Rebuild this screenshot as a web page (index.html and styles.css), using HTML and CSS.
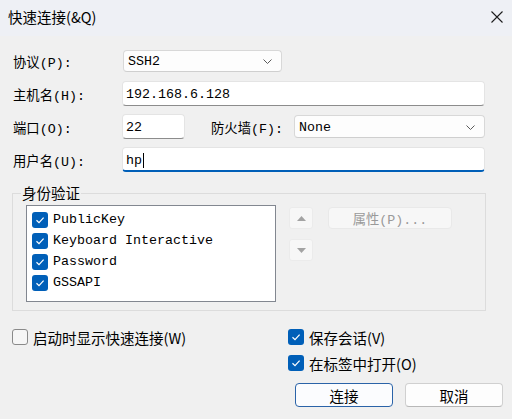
FILE: index.html
```html
<!DOCTYPE html>
<html lang="zh-CN">
<head>
<meta charset="utf-8">
<title>快速连接</title>
<link rel="stylesheet" href="styles.css">
</head>
<body>
<div class="titlebar">
  <span class="title">快速连接(&amp;Q)</span>
  <span class="close"><svg width="12" height="12" viewBox="0 0 12 12"><path d="M0.5 0.5 L11.5 11.5 M11.5 0.5 L0.5 11.5" stroke="#1c1c1c" stroke-width="1.1" fill="none"/></svg></span>
</div>
<div class="content">
  <div class="form">
    <div class="row">
      <span class="lbl">协议(P):</span>
      <div class="combo w-proto"><span>SSH2</span><svg class="chev" width="9" height="5" viewBox="0 0 9 5"><path d="M0.5 0.5 L4.5 4.5 L8.5 0.5" stroke="#5a5a5a" stroke-width="1" fill="none"/></svg></div>
    </div>
    <div class="row">
      <span class="lbl">主机名(H):</span>
      <div class="input w-full">192.168.6.128</div>
    </div>
    <div class="row">
      <span class="lbl">端口(O):</span>
      <div class="input w-port">22</div>
      <span class="lbl lbl-fw">防火墙(F):</span>
      <div class="combo w-fw"><span>None</span><svg class="chev" width="9" height="5" viewBox="0 0 9 5"><path d="M0.5 0.5 L4.5 4.5 L8.5 0.5" stroke="#5a5a5a" stroke-width="1" fill="none"/></svg></div>
    </div>
    <div class="row">
      <span class="lbl">用户名(U):</span>
      <div class="input focus w-full">hp<span class="caret"></span></div>
    </div>
  </div>

  <fieldset class="group">
    <legend class="legend">身份验证</legend>
    <div class="group-body">
      <div class="listbox">
        <div class="item"><span class="cb on"><svg width="16" height="16" viewBox="0 0 16 16"><path d="M4.5 8.2 L7 10.6 L11.6 5.6" stroke="#fff" stroke-width="1.2" fill="none"/></svg></span>PublicKey</div>
        <div class="item"><span class="cb on"><svg width="16" height="16" viewBox="0 0 16 16"><path d="M4.5 8.2 L7 10.6 L11.6 5.6" stroke="#fff" stroke-width="1.2" fill="none"/></svg></span>Keyboard Interactive</div>
        <div class="item"><span class="cb on"><svg width="16" height="16" viewBox="0 0 16 16"><path d="M4.5 8.2 L7 10.6 L11.6 5.6" stroke="#fff" stroke-width="1.2" fill="none"/></svg></span>Password</div>
        <div class="item"><span class="cb on"><svg width="16" height="16" viewBox="0 0 16 16"><path d="M4.5 8.2 L7 10.6 L11.6 5.6" stroke="#fff" stroke-width="1.2" fill="none"/></svg></span>GSSAPI</div>
      </div>
      <div class="arrows">
        <div class="arrow-btn"><svg width="9" height="5" viewBox="0 0 9 5"><path d="M0 5 L4.5 0 L9 5 Z" fill="#a3a3a3"/></svg></div>
        <div class="arrow-btn"><svg width="9" height="5" viewBox="0 0 9 5"><path d="M0 0 L9 0 L4.5 5 Z" fill="#a3a3a3"/></svg></div>
      </div>
      <div class="props">属性(P)...</div>
    </div>
  </fieldset>

  <div class="bottom">
    <div class="bottom-left">
      <div class="check-row"><span class="cb off"></span>启动时显示快速连接(W)</div>
    </div>
    <div class="bottom-right">
      <div class="check-row"><span class="cb on"><svg width="16" height="16" viewBox="0 0 16 16"><path d="M4.5 8.2 L7 10.6 L11.6 5.6" stroke="#fff" stroke-width="1.2" fill="none"/></svg></span>保存会话(V)</div>
      <div class="check-row"><span class="cb on"><svg width="16" height="16" viewBox="0 0 16 16"><path d="M4.5 8.2 L7 10.6 L11.6 5.6" stroke="#fff" stroke-width="1.2" fill="none"/></svg></span>在标签中打开(O)</div>
      <div class="buttons">
        <div class="btn btn-default">连接</div>
        <div class="btn">取消</div>
      </div>
    </div>
  </div>
</div>
</body>
</html>
```

FILE: styles.css
```css
* { box-sizing: border-box; }
html, body { margin: 0; padding: 0; }
body {
  width: 512px;
  height: 419px;
  overflow: hidden;
  background: #f0f0f0;
  color: #000;
  font-family: "Noto Sans CJK SC", "Noto Sans", sans-serif;
}
.titlebar {
  height: 36px;
  background: #eef0f5;
  display: flex;
  align-items: center;
  justify-content: space-between;
  padding: 0 9px 2px 8px;
}
.title { font-size: 14.5px; line-height: 1; }
.close { display: flex; width: 12px; height: 12px; }

.content { padding: 12px 9px 0 12px; }

.form { display: flex; flex-direction: column; gap: 8px; }
.row { display: flex; align-items: center; height: 25px; }
.lbl {
  width: 110px;
  padding-left: 1px;
  padding-top: 2px;
  font-family: "Liberation Mono", "Noto Sans CJK SC", monospace;
  font-size: 13.33px;
  white-space: nowrap;
}
.lbl-fw { width: 83px; margin-left: 26px; padding-left: 0; }

.combo {
  height: 22px;
  background: #fdfdfd;
  border: 1px solid #d8d8d8;
  border-bottom-color: #cfcfcf;
  border-radius: 4px;
  display: flex;
  align-items: center;
  justify-content: space-between;
  padding: 1px 9px 0 4px;
  font-family: "Liberation Mono", monospace;
  font-size: 13.33px;
}
.w-proto { width: 159px; margin-left: 1px; margin-top: 1px; }
.w-fw { width: 191px; height: 23px; }

.input {
  height: 25px;
  background: #fff;
  border: 1px solid #e4e4e4;
  border-bottom: 1px solid #8c8c8c;
  border-radius: 4px;
  display: flex;
  align-items: center;
  padding: 1px 3px 0;
  font-family: "Liberation Mono", monospace;
  font-size: 13.33px;
}
.input.focus { border-bottom: 2px solid #005fb8; padding-top: 2px; }
.w-full { width: 363px; }
.w-port { width: 63px; }
.caret { display: inline-block; width: 1px; height: 15px; background: #000; margin-left: 1px; }

.group {
  width: 474px;
  margin: 11px 0 0;
  padding: 2px 0 8px 13px;
  border: 1px solid #dcdcdc;
  min-width: 0;
}
.legend {
  font-size: 14.5px;
  line-height: 20px;
  padding: 0 1px;
  margin-left: -5px;
}
.group-body { display: flex; align-items: flex-start; }
.listbox {
  width: 250px;
  height: 97px;
  background: #fff;
  border: 1px solid #828790;
  padding: 3px 0 0 5px;
}
.item {
  height: 21px;
  display: flex;
  align-items: center;
  gap: 5px;
  font-family: "Liberation Mono", monospace;
  font-size: 13.33px;
}
.cb {
  flex: none;
  width: 16px;
  height: 16px;
  border-radius: 3px;
  display: flex;
}
.cb.on { background: #005fb8; }
.cb.off { background: #f6f6f6; border: 1px solid #8a8a8a; }

.arrows {
  display: flex;
  flex-direction: column;
  gap: 10px;
  margin-left: 13px;
  padding-top: 2px;
}
.arrow-btn {
  width: 24px;
  height: 22px;
  background: #f7f7f7;
  border: 1px solid #ebebeb;
  border-radius: 3px;
  display: flex;
  align-items: center;
  justify-content: center;
}
.props {
  margin: 2px 0 0 15px;
  width: 124px;
  height: 22px;
  background: #f7f7f7;
  border: 1px solid #e9e9e9;
  border-radius: 4px;
  color: #9a9a9a;
  font-family: "Liberation Mono", "Noto Sans CJK SC", monospace;
  font-size: 13.33px;
  display: flex;
  align-items: center;
  justify-content: center;
}

.bottom { display: flex; margin-top: 13px; }
.bottom-left { width: 276px; }
.bottom-right { display: flex; flex-direction: column; }
.check-row {
  height: 26px;
  display: flex;
  align-items: center;
  gap: 5px;
  font-size: 14.5px;
  white-space: nowrap;
}
.buttons { display: flex; gap: 12px; margin: 7px 0 0 7px; }
.btn {
  width: 98px;
  height: 24px;
  background: #fdfdfd;
  border: 1px solid #d0d0d0;
  border-bottom-color: #b8b8b8;
  border-radius: 4px;
  display: flex;
  align-items: center;
  justify-content: center;
  font-size: 14.5px;
}
.btn-default { border: 1px solid #2a63a8; background: #fbfcfe; }
```
